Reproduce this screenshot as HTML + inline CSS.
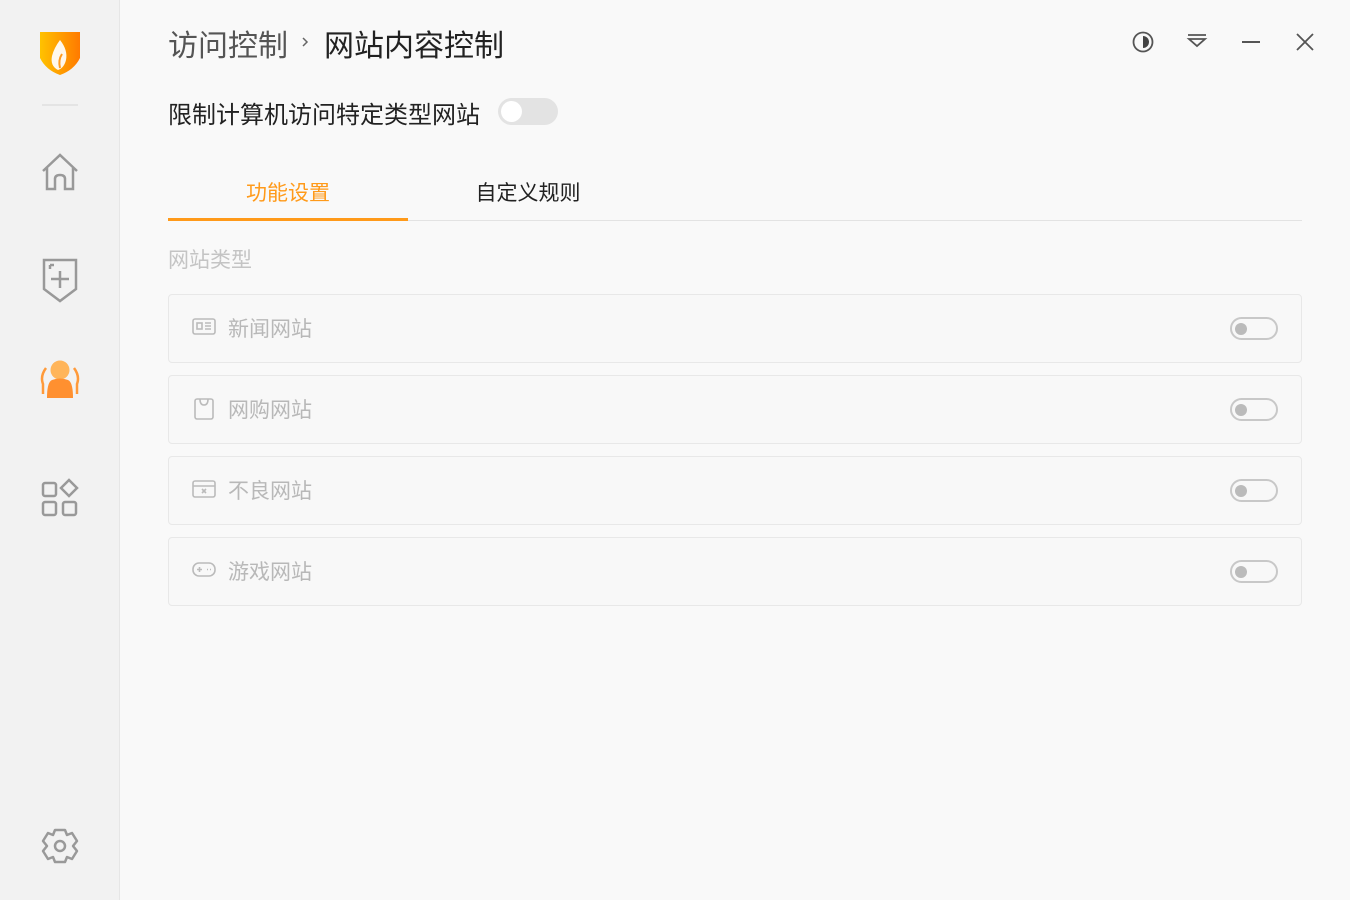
<!DOCTYPE html><html><head><meta charset="utf-8"><style>
*{margin:0;padding:0;box-sizing:border-box}
body{width:1350px;height:900px;background:#f9f9f9;font-family:"Liberation Sans","Noto Sans CJK SC",sans-serif;position:relative;overflow:hidden}
.side{position:absolute;left:0;top:0;width:120px;height:900px;background:#f2f2f2;border-right:1px solid #e6e6e6}
.abs{position:absolute}
.row{position:absolute;left:168px;width:1134px;height:69px;border:1px solid #e8e8e8;border-radius:4px;background:#f8f8f8}
.row .t{position:absolute;left:59px;top:18px;font-size:21px;color:#b8b8b8}
.row svg{position:absolute;left:23px;top:22px}
.tg{position:absolute;left:1061px;top:22px;width:48px;height:23px;border:2px solid #c8c8c8;border-radius:12px}
.tg::after{content:"";position:absolute;left:3px;top:3.5px;width:12px;height:12px;border-radius:50%;background:#bbb}
</style></head><body>
<div class="side">
<svg class="abs" style="left:38px;top:28px" width="44" height="48" viewBox="0 0 44 48"><defs><linearGradient id="g" x1="0" x2="1"><stop offset="0" stop-color="#ffc200"/><stop offset="1" stop-color="#ff7a00"/></linearGradient></defs><path d="M2 4 L42 4 L42 30 Q36 42 22 47 Q8 42 2 30Z" fill="url(#g)"/><path d="M22 12 Q30 22 28 32 Q26 40 20 42 Q12 38 14 28 Q16 20 22 12Z" fill="#fff" opacity=".92"/><path d="M24 26 Q20 32 22 40" stroke="#ff9a20" stroke-width="2" fill="none"/></svg>
<div class="abs" style="left:42px;top:104px;width:36px;height:2px;background:#e4e4e4"></div>
<svg class="abs" style="left:40px;top:153px" width="40" height="40" viewBox="0 0 40 40" fill="none" stroke="#999" stroke-width="2.5"><path d="M3 18 L20 2 L37 18 M7 15 V36 H15 V26 Q15 22 20 22 Q25 22 25 26 V36 H33 V15"/></svg>
<svg class="abs" style="left:42px;top:257px" width="36" height="46" viewBox="0 0 36 46" fill="none" stroke="#999" stroke-width="2.5"><path d="M2 3 H34 V32 L18 44 L2 32Z M18 14 V31 M9 22 H27 M8 8 H12 M8 8 V12"/></svg>
<svg class="abs" style="left:38px;top:358px" width="44" height="42" viewBox="0 0 44 42"><circle cx="22" cy="12" r="9.5" fill="#ffb55a"/><path d="M9 40 Q9 24 14 22 Q22 19 30 22 Q35 24 35 40Z" fill="#ff9030"/><path d="M8 10 Q2 18 5 26 L5 36 M36 10 Q42 18 39 26 L39 36" stroke="#ff9a3a" stroke-width="2.5" fill="none"/></svg>
<svg class="abs" style="left:40px;top:478px" width="40" height="40" viewBox="0 0 40 40" fill="none" stroke="#999" stroke-width="2.5"><rect x="3" y="5" width="13" height="13" rx="2"/><rect x="3" y="24" width="13" height="13" rx="2"/><rect x="23" y="24" width="13" height="13" rx="2"/><path d="M29 2 L37 10 L29 18 L21 10Z"/></svg>
<svg class="abs" style="left:40px;top:826px" width="40" height="40" viewBox="0 0 40 40" fill="none" stroke="#999" stroke-width="2.5"><path d="M15 4 H25 L27 9 L32 7 L37 15 L33 20 L37 25 L32 33 L27 31 L25 36 H15 L13 31 L8 33 L3 25 L7 20 L3 15 L8 7 L13 9Z" stroke-linejoin="round"/><circle cx="20" cy="20" r="5"/></svg>
</div>
<div class="abs" style="left:168px;top:21px;font-size:30px;color:#555">访问控制</div>
<svg class="abs" style="left:300px;top:36px" width="10" height="12" viewBox="0 0 10 12" fill="none" stroke="#666" stroke-width="1.5"><path d="M3 2 L7 6 L3 10"/></svg>
<div class="abs" style="left:324px;top:21px;font-size:30px;color:#222">网站内容控制</div>
<svg class="abs" style="left:1132px;top:31px" width="22" height="22" viewBox="0 0 22 22"><circle cx="11" cy="11" r="9.5" fill="none" stroke="#555" stroke-width="1.8"/><path d="M11 5 A6 6 0 0 1 11 17Z" fill="#444"/></svg>
<svg class="abs" style="left:1186px;top:33px" width="22" height="16" viewBox="0 0 22 16" fill="none" stroke="#555" stroke-width="1.8"><path d="M2 2 H20 M3 6 H19 L11 13Z"/></svg>
<div class="abs" style="left:1242px;top:41px;width:18px;height:2px;background:#555"></div>
<svg class="abs" style="left:1295px;top:32px" width="20" height="20" viewBox="0 0 20 20" stroke="#555" stroke-width="1.8"><path d="M2 2 L18 18 M18 2 L2 18"/></svg>
<div class="abs" style="left:168px;top:95px;font-size:24px;color:#222">限制计算机访问特定类型网站</div>
<div class="abs" style="left:498px;top:98px;width:60px;height:27px;border-radius:14px;background:#e3e3e3"><div style="position:absolute;left:3px;top:3px;width:21px;height:21px;border-radius:50%;background:#fff"></div></div>
<div class="abs" style="left:168px;top:177px;width:240px;text-align:center;font-size:21px;color:#ff9a1a">功能设置</div>
<div class="abs" style="left:408px;top:177px;width:240px;text-align:center;font-size:21px;color:#222">自定义规则</div>
<div class="abs" style="left:168px;top:220px;width:1134px;height:1px;background:#e3e3e3"></div>
<div class="abs" style="left:168px;top:218px;width:240px;height:3px;background:#ff9a1a"></div>
<div class="abs" style="left:168px;top:244px;font-size:21px;color:#c4c4c4">网站类型</div>
<div class="row" style="top:294px"><svg width="24" height="20" viewBox="0 0 24 20" fill="none" stroke="#bbb" stroke-width="1.6"><rect x="1" y="2" width="22" height="15" rx="2"/><rect x="5" y="6" width="5" height="6"/><path d="M13 6 H19 M13 9 H19 M13 12 H19"/></svg><div class="t">新闻网站</div><div class="tg"></div></div>
<div class="row" style="top:375px"><svg width="24" height="22" viewBox="0 0 24 22" fill="none" stroke="#bbb" stroke-width="1.6"><rect x="3" y="1" width="18" height="20" rx="2"/><path d="M8 1 Q8 7 12 7 Q16 7 16 1"/></svg><div class="t">网购网站</div><div class="tg"></div></div>
<div class="row" style="top:456px"><svg width="24" height="20" viewBox="0 0 24 20" fill="none" stroke="#bbb" stroke-width="1.6"><rect x="1" y="2" width="22" height="16" rx="2"/><path d="M1 7 H23 M10 10 L14 14 M14 10 L10 14"/></svg><div class="t">不良网站</div><div class="tg"></div></div>
<div class="row" style="top:537px"><svg width="24" height="20" viewBox="0 0 24 20" fill="none" stroke="#bbb" stroke-width="1.6"><rect x="1" y="3" width="22" height="13" rx="6"/><path d="M5 9.5 H10 M7.5 7 V12 M15 9.5 H16 M18 9.5 H19"/></svg><div class="t">游戏网站</div><div class="tg"></div></div>
</body></html>
